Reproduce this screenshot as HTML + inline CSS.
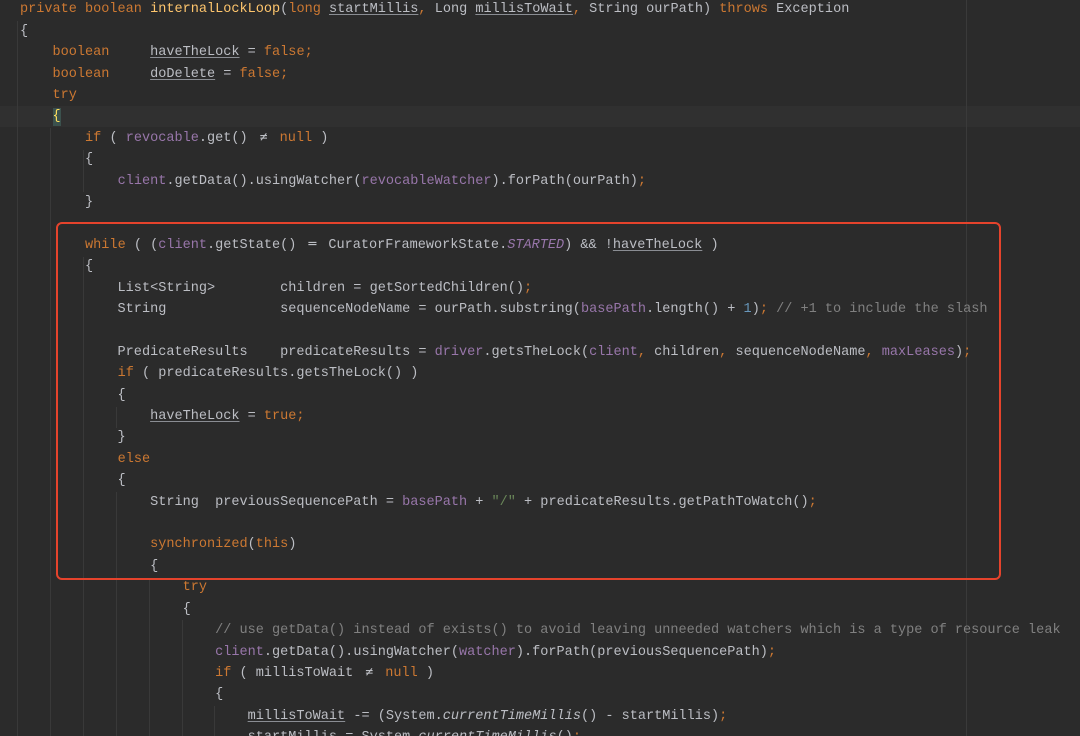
<!DOCTYPE html>
<html><head><meta charset="utf-8"><style>
html,body{margin:0;padding:0;background:#2b2b2b;width:1080px;height:736px;overflow:hidden;position:relative}
pre{position:absolute;left:20px;top:-0.7px;margin:0;font-family:"Liberation Mono",monospace;font-size:13.55px;line-height:21.4px;color:#bcbec4;white-space:pre}
.k{color:#cc7832}.m{color:#ffc66d}.p{color:#9876aa}.c{color:#808080}.s{color:#6a8759}.n{color:#6897bb}
.u{text-decoration:underline;text-decoration-color:#8a8d93;text-underline-offset:2px}
.i{font-style:italic}
.l{display:inline-block;width:2ch;text-align:center;font-family:"DejaVu Sans Mono",monospace;font-size:13px;line-height:1;vertical-align:baseline}
.g{position:absolute;width:1px;background:#393939}
.hl{position:absolute;left:0;top:106px;width:1080px;height:21px;background:#303030}
.box{position:absolute;left:56px;top:222px;width:941px;height:354px;border:2.5px solid #e5432c;border-radius:6px}
.rm{position:absolute;left:966px;top:0;width:1px;height:736px;background:#3a3a3a}
.cur{display:inline-block;background:#3b514d;color:#fede5d;line-height:1.3}
</style></head><body>
<div class="hl"></div>
<div class="rm"></div>
<div class="g" style="left:17px;top:21px;height:715px"></div>
<div class="g" style="left:50px;top:128px;height:608px"></div>
<div class="g" style="left:83px;top:150px;height:42px"></div>
<div class="g" style="left:83px;top:257px;height:479px"></div>
<div class="g" style="left:116px;top:407px;height:21px"></div>
<div class="g" style="left:116px;top:492px;height:244px"></div>
<div class="g" style="left:149px;top:578px;height:158px"></div>
<div class="g" style="left:182px;top:620px;height:116px"></div>
<div class="g" style="left:214px;top:706px;height:30px"></div>
<pre><span class="k">private boolean</span> <span class="m">internalLockLoop</span>(<span class="k">long</span> <span class="u">startMillis</span><span class="k">,</span> Long <span class="u">millisToWait</span><span class="k">,</span> String ourPath) <span class="k">throws</span> Exception
{
    <span class="k">boolean</span>     <span class="u">haveTheLock</span> = <span class="k">false;</span>
    <span class="k">boolean</span>     <span class="u">doDelete</span> = <span class="k">false;</span>
    <span class="k">try</span>
    <span class="cur">{</span>
        <span class="k">if</span> ( <span class="p">revocable</span>.get() <span class="l">≠</span> <span class="k">null</span> )
        {
            <span class="p">client</span>.getData().usingWatcher(<span class="p">revocableWatcher</span>).forPath(ourPath)<span class="k">;</span>
        }

        <span class="k">while</span> ( (<span class="p">client</span>.getState() <span class="l">═</span> CuratorFrameworkState.<span class="p i">STARTED</span>) &amp;&amp; !<span class="u">haveTheLock</span> )
        {
            List&lt;String&gt;        children = getSortedChildren()<span class="k">;</span>
            String              sequenceNodeName = ourPath.substring(<span class="p">basePath</span>.length() + <span class="n">1</span>)<span class="k">;</span> <span class="c">// +1 to include the slash</span>

            PredicateResults    predicateResults = <span class="p">driver</span>.getsTheLock(<span class="p">client</span><span class="k">,</span> children<span class="k">,</span> sequenceNodeName<span class="k">,</span> <span class="p">maxLeases</span>)<span class="k">;</span>
            <span class="k">if</span> ( predicateResults.getsTheLock() )
            {
                <span class="u">haveTheLock</span> = <span class="k">true;</span>
            }
            <span class="k">else</span>
            {
                String  previousSequencePath = <span class="p">basePath</span> + <span class="s">"/"</span> + predicateResults.getPathToWatch()<span class="k">;</span>

                <span class="k">synchronized</span>(<span class="k">this</span>)
                {
                    <span class="k">try</span>
                    {
                        <span class="c">// use getData() instead of exists() to avoid leaving unneeded watchers which is a type of resource leak</span>
                        <span class="p">client</span>.getData().usingWatcher(<span class="p">watcher</span>).forPath(previousSequencePath)<span class="k">;</span>
                        <span class="k">if</span> ( millisToWait <span class="l">≠</span> <span class="k">null</span> )
                        {
                            <span class="u">millisToWait</span> -= (System.<span class="i">currentTimeMillis</span>() - startMillis)<span class="k">;</span>
                            <span class="u">startMillis</span> = System.<span class="i">currentTimeMillis</span>()<span class="k">;</span>
</pre>
<div class="box"></div>
</body></html>
